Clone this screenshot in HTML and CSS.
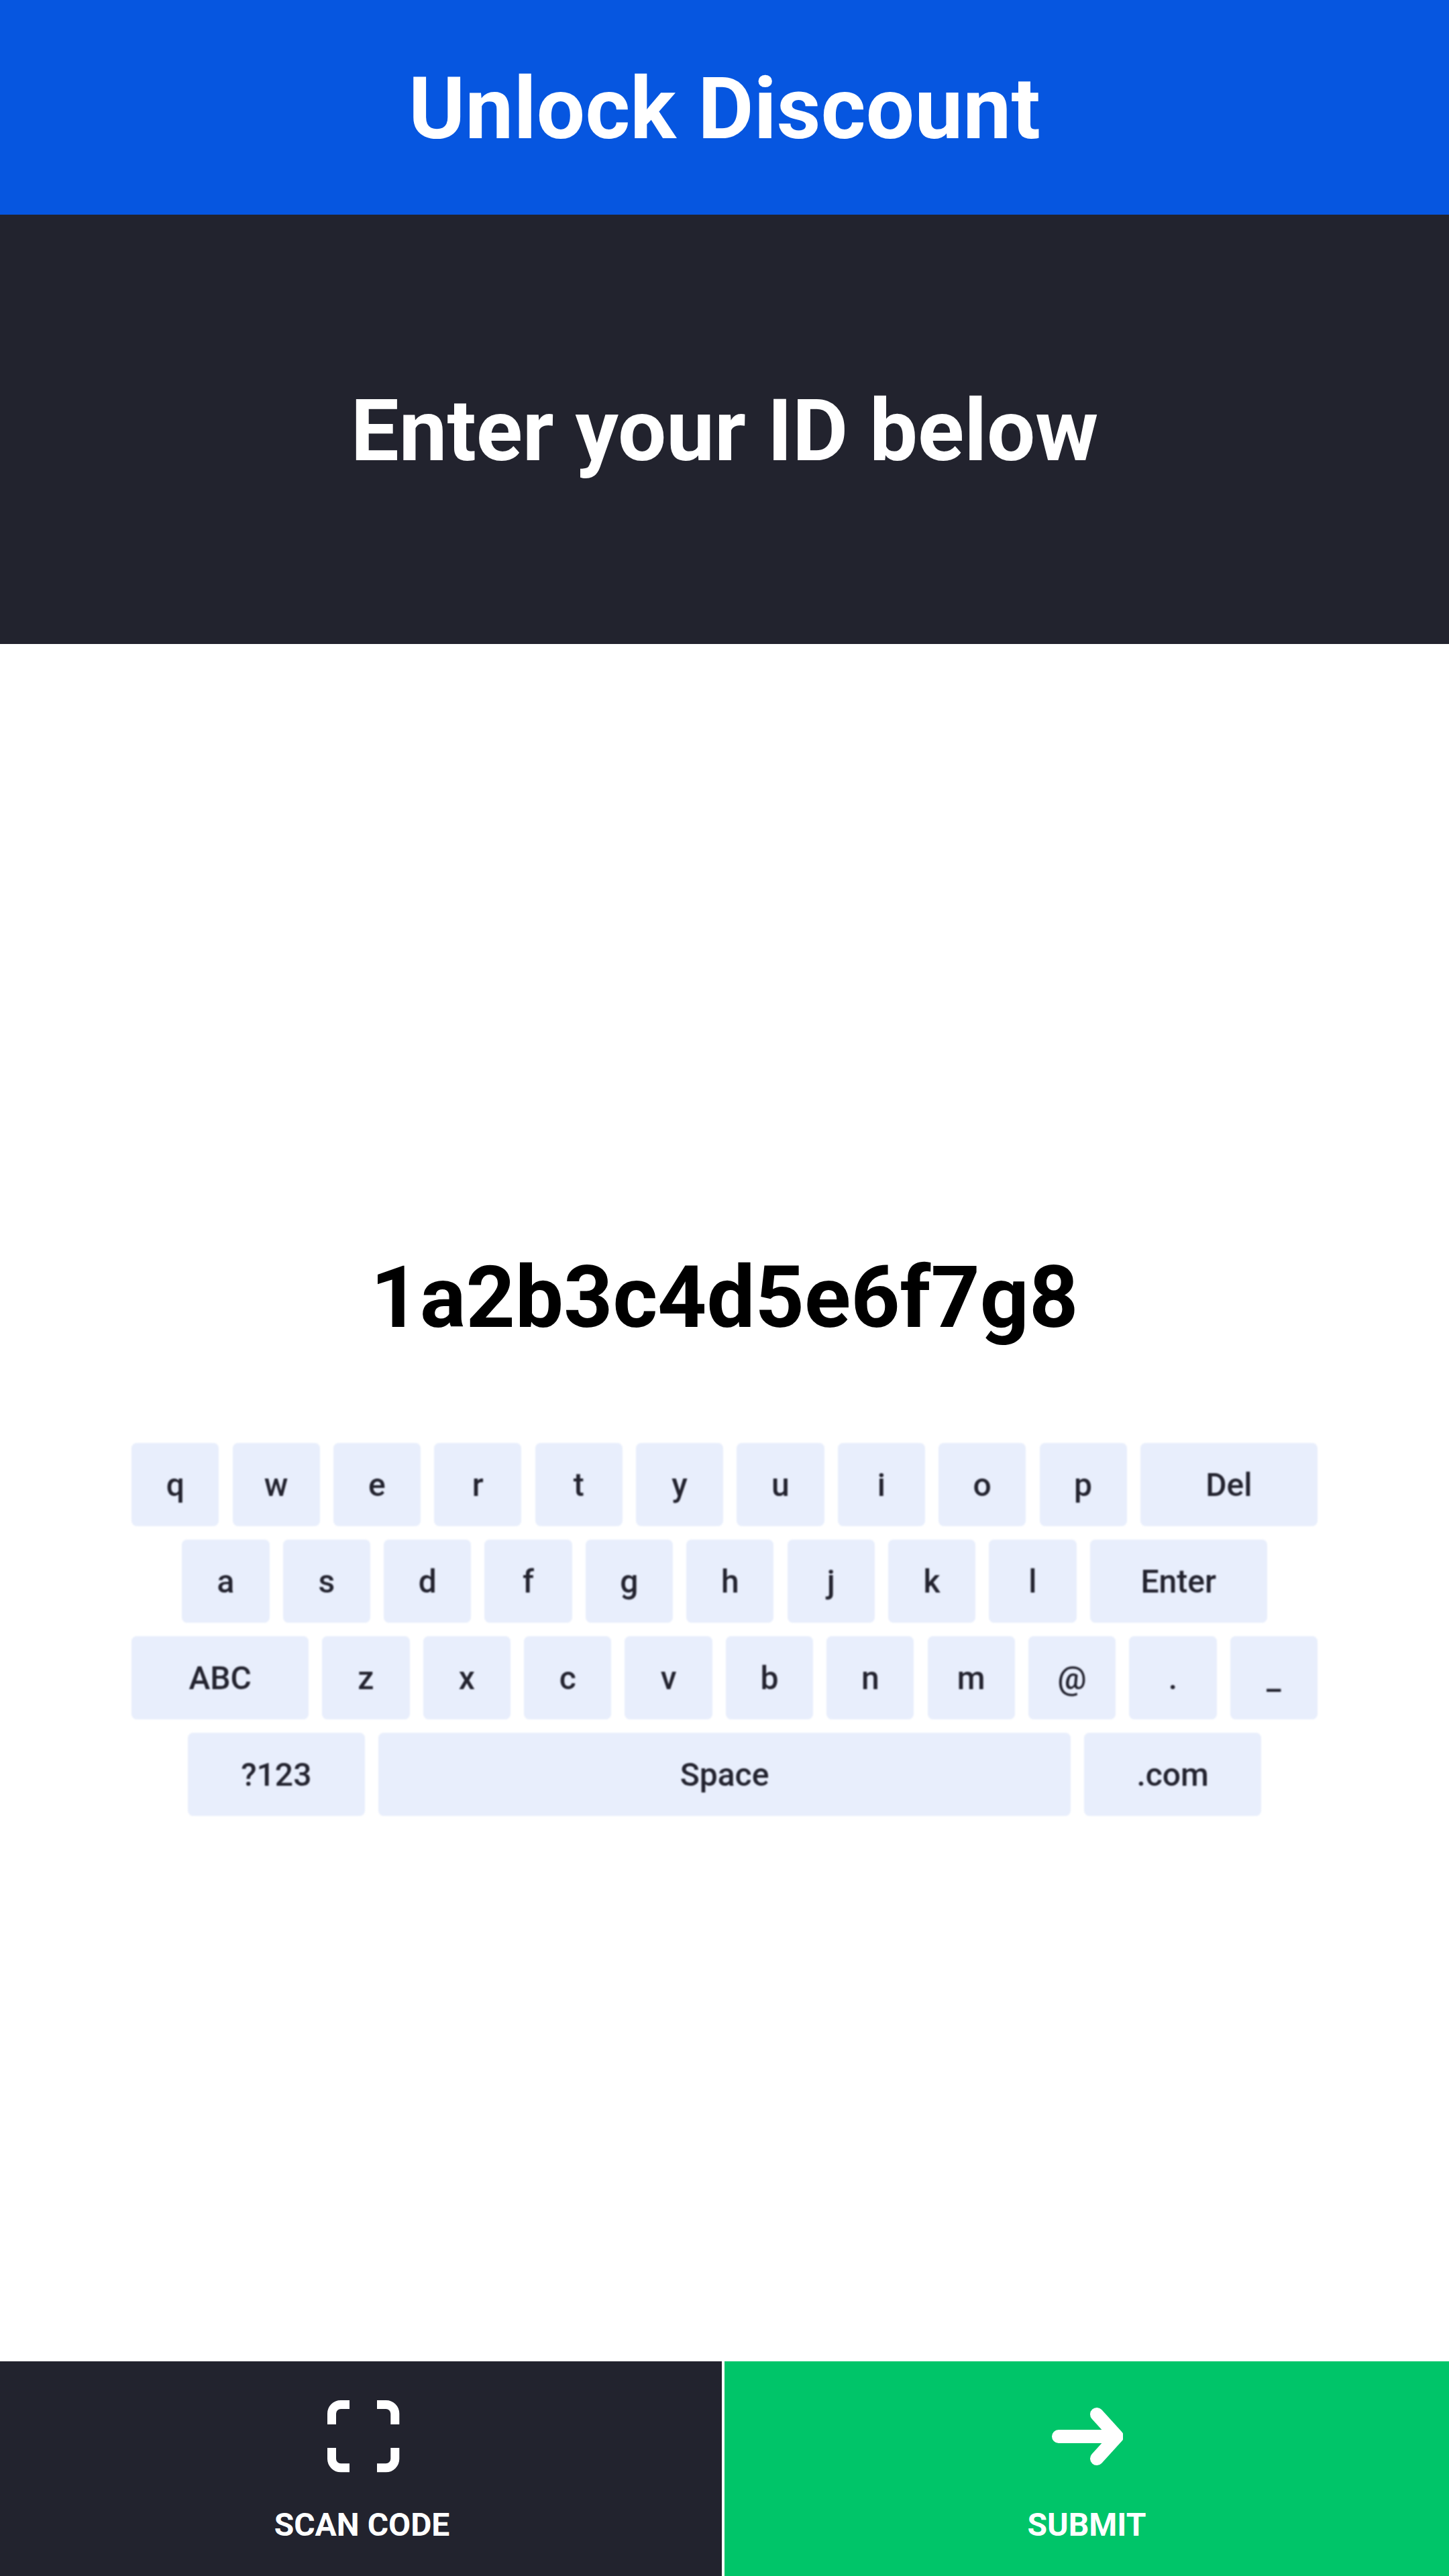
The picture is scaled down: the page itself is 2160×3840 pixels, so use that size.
FILE: index.html
```html
<!DOCTYPE html>
<html lang="en">
<head>
<meta charset="utf-8">
<title>Unlock Discount</title>
<link rel="stylesheet" href="styles.css">
</head>
<body>
<div class="screen">
  <header class="topbar"><h1 class="title">Unlock Discount</h1></header>
  <section class="prompt"><h2 class="title">Enter your ID below</h2></section>
  <main class="entry">
    <div class="value">1a2b3c4d5e6f7g8</div>
    <div class="keyboard">
      <div class="row">
        <div class="key">q</div><div class="key">w</div><div class="key">e</div><div class="key">r</div><div class="key">t</div><div class="key">y</div><div class="key">u</div><div class="key">i</div><div class="key">o</div><div class="key">p</div><div class="key wide">Del</div>
      </div>
      <div class="row">
        <div class="key">a</div><div class="key">s</div><div class="key">d</div><div class="key">f</div><div class="key">g</div><div class="key">h</div><div class="key">j</div><div class="key">k</div><div class="key">l</div><div class="key wide">Enter</div>
      </div>
      <div class="row">
        <div class="key wide">ABC</div><div class="key">z</div><div class="key">x</div><div class="key">c</div><div class="key">v</div><div class="key">b</div><div class="key">n</div><div class="key">m</div><div class="key">@</div><div class="key">.</div><div class="key">_</div>
      </div>
      <div class="row">
        <div class="key wide">?123</div><div class="key space">Space</div><div class="key wide">.com</div>
      </div>
    </div>
  </main>
  <footer class="actions">
    <button class="action scan" type="button">
      <svg class="icon scan-icon" viewBox="0 0 108 108" aria-hidden="true">
        <path d="M33 6.500H20A13.500 13.500 0 0 0 6.500 20V36M74 6.500H87.300A13.500 13.500 0 0 1 100.800 20V36M6.500 71V87.300A13.500 13.500 0 0 0 20 100.800H33M100.800 71V87.300A13.500 13.500 0 0 1 87.300 100.800H74"/>
      </svg>
      <span class="label">SCAN CODE</span>
    </button>
    <button class="action submit" type="button">
      <svg class="icon" viewBox="0 0 108 108" aria-hidden="true">
        <path class="arrow" d="M12 54H99M69 21L99 54L69 87"/>
      </svg>
      <span class="label">SUBMIT</span>
    </button>
  </footer>
</div>
</body>
</html>
```

FILE: styles.css
```css
* { box-sizing: border-box; }
html, body { margin: 0; padding: 0; background: #fff; }
body { font-family: Roboto, "Liberation Sans", sans-serif; }
.screen { width: 2160px; height: 3840px; display: flex; flex-direction: column; }
.topbar { height: 320px; padding-top: 4px; background: #0656e0; display: flex; align-items: center; justify-content: center; flex: none; }
.topbar .title { letter-spacing: 0.3px; }
.prompt { height: 640px; padding-top: 4px; background: #22232e; display: flex; align-items: center; justify-content: center; flex: none; }
.title { margin: 0; color: #fff; font-size: 128px; font-weight: 700; line-height: 1; }
.entry { flex: 1; display: flex; flex-direction: column; align-items: center; padding-top: 910px; }
.value { font-size: 128px; font-weight: 700; color: #000; line-height: 128px; height: 128px; }
.keyboard { margin-top: 153px; display: flex; flex-direction: column; gap: 20px; filter: blur(1.2px); }
.row { display: flex; justify-content: center; gap: 20.2px; }
.key { width: 130.2px; height: 124px; border-radius: 8px; background: #e8eefc; color: #23232f; font-size: 48px; font-weight: 500; display: flex; align-items: center; justify-content: center; }
.key.wide { width: 264px; }
.key.space { width: 1032px; }
.actions { height: 320px; display: flex; flex: none; }
.action { width: 1080px; height: 320px; border: 0; padding: 0; color: #fff; font-family: inherit; display: flex; flex-direction: column; align-items: center; }
.scan { background: #22232e; border-right: 4px solid #fff; padding-left: 3px; }
.scan-icon { margin-left: 4px; }
.submit { background: #00c569; }
.icon { width: 108px; height: 108px; margin-top: 58px; fill: none; stroke: #fff; stroke-width: 13; flex: none; }
.arrow { stroke-width: 20; stroke-linecap: round; stroke-linejoin: round; }
.label { margin-top: 50px; font-size: 48px; font-weight: 700; line-height: 56px; }
```
